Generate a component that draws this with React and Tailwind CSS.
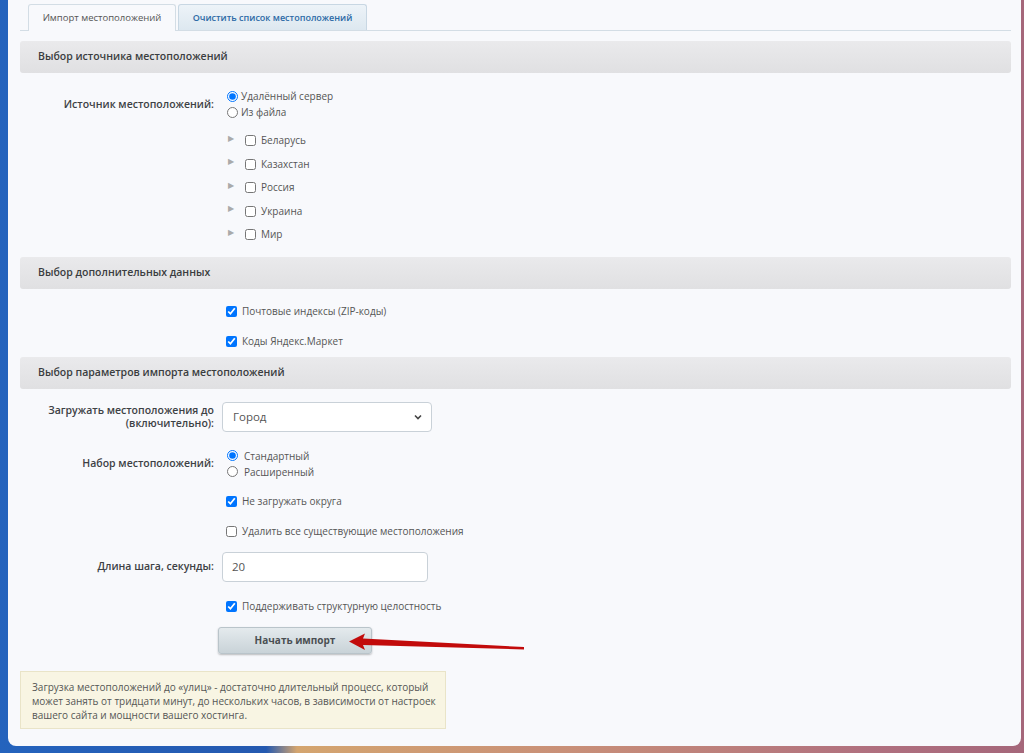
import React from 'react';

const font = { fontFamily: '"Open Sans", "Noto Sans", sans-serif' };

const SectionHeader = ({ children, className = '' }) => (
  <div className={`h-[32px] flex items-center pl-[18px] rounded-[3px] bg-gradient-to-b from-[#eaeaec] to-[#e0e0e2] text-[10.5px] font-semibold text-[#3a3d40] ${className}`}>
    {children}
  </div>
);

const Check = ({ checked }) => (
  <input type="checkbox" readOnly checked={checked} className="m-0 w-[11px] h-[11px] accent-[#0075ff]" />
);

const Radio = ({ checked }) => (
  <input type="radio" readOnly checked={checked} className="m-0 w-[11px] h-[11px] accent-[#0075ff]" />
);

const Row = ({ label, children, className = '' }) => (
  <div className={`flex items-center ${className}`}>
    <div className="w-[202px] pr-[8px] text-right text-[10.5px] font-semibold text-[#3d4145] leading-[13px]">{label}</div>
    <div className="flex-1">{children}</div>
  </div>
);

const CheckRow = ({ checked, children, className = '' }) => (
  <div className={`h-[30px] flex items-center pl-[206px] gap-[5px] text-[10px] text-[#555] ${className}`}>
    <Check checked={checked} />
    <span>{children}</span>
  </div>
);

const countries = ['Беларусь', 'Казахстан', 'Россия', 'Украина', 'Мир'];

export default function App() {
  return (
    <div className="w-[1024px] h-[753px] overflow-hidden bg-[linear-gradient(90deg,#2463bd_0%,#2459b0_26%,#d4a56f_29%,#c99078_55%,#b0707f_85%,#a5677a_100%)]" style={font}>
      <div className="relative ml-[8px] mr-[3px] h-[746px] rounded-b-[8px] bg-[#f8f9fc] px-[12px] pr-[10px]">
        {/* Tabs */}
        <div className="pt-[4px] flex items-end gap-[2px] pl-[8px] border-b border-[#d3dde5] h-[31px]">
          <div className="h-[27px] w-[148px] flex items-center justify-center rounded-t-[3px] border border-b-0 border-[#d3dde5] bg-[#f8f9fc] text-[9.5px] text-[#555] -mb-px">
            Импорт местоположений
          </div>
          <div className="h-[26px] w-[189px] flex items-center justify-center rounded-t-[3px] border border-b-0 border-[#c8d7e3] bg-gradient-to-b from-[#edf3f8] to-[#dde8f0] text-[9px] font-semibold text-[#2c6aa6]">
            Очистить список местоположений
          </div>
        </div>

        <SectionHeader className="mt-[10px]">Выбор источника местоположений</SectionHeader>

        <Row label="Источник местоположений:" className="mt-[15px]">
          <div className="text-[10px] text-[#555] leading-[16px]">
            <label className="flex items-center gap-[3px] pl-[5px]"><Radio checked />Удалённый сервер</label>
            <label className="flex items-center gap-[3px] pl-[5px]"><Radio checked={false} />Из файла</label>
          </div>
        </Row>

        <div className="mt-[9px] pl-[208px]">
          {countries.map((c) => (
            <div key={c} className="h-[23.5px] flex items-center text-[10px] text-[#555]">
              <span className="w-[17px] text-[8px] text-[#aaa] -mt-[6px]">▶</span>
              <span className="w-[16px] flex"><Check checked={false} /></span>
              <span>{c}</span>
            </div>
          ))}
        </div>

        <SectionHeader className="mt-[10px]">Выбор дополнительных данных</SectionHeader>

        <CheckRow checked className="mt-[8px]">Почтовые индексы (ZIP-коды)</CheckRow>
        <CheckRow checked className="h-[29px]">Коды Яндекс.Маркет</CheckRow>

        <SectionHeader>Выбор параметров импорта местоположений</SectionHeader>

        <Row label={<>Загружать местоположения до<br />(включительно):</>} className="mt-[13px]">
          <div className="w-[210px] h-[30px] rounded-[4px] border border-[#c9d1d8] bg-white flex items-center justify-between pl-[10px] pr-[8px] text-[11.5px] text-[#555]">
            <span>Город</span>
            <svg width="10" height="10" viewBox="0 0 10 10"><path d="M2 3.5l3 3 3-3" fill="none" stroke="#444" strokeWidth="1.6" /></svg>
          </div>
        </Row>

        <Row label="Набор местоположений:" className="mt-[16px]">
          <div className="text-[10px] text-[#555] leading-[16px]">
            <label className="flex items-center gap-[6px] pl-[5px]"><Radio checked />Стандартный</label>
            <label className="flex items-center gap-[6px] pl-[5px]"><Radio checked={false} />Расширенный</label>
          </div>
        </Row>

        <CheckRow checked className="mt-[7px]">Не загружать округа</CheckRow>
        <CheckRow checked={false}>Удалить все существующие местоположения</CheckRow>

        <Row label="Длина шага, секунды:" className="mt-[5px]">
          <div className="w-[206px] h-[30px] rounded-[4px] border border-[#c9d1d8] bg-white flex items-center pl-[9px] text-[11.5px] text-[#555]">20</div>
        </Row>

        <CheckRow checked className="mt-[10px]">Поддерживать структурную целостность</CheckRow>

        <div className="mt-[4px] pl-[198px]">
          <button className="w-[154px] h-[27px] rounded-[3px] border border-[#b9c4ca] bg-gradient-to-b from-[#e4eaed] to-[#c9d3d8] shadow-[0_1px_2px_rgba(0,0,0,0.25)] text-[10px] font-bold text-[#4a4f53]">
            Начать импорт
          </button>
        </div>

        <div className="mt-[17px] w-[426px] h-[58px] border border-[#e9e4c8] bg-[#f8f5e3] pl-[11px] pt-[8px] text-[10px] leading-[14px] text-[#555] whitespace-nowrap">
          Загрузка местоположений до «улиц» - достаточно длительный процесс, который<br />
          может занять от тридцати минут, до нескольких часов, в зависимости от настроек<br />
          вашего сайта и мощности вашего хостинга.
        </div>

        {/* annotation arrow */}
        <svg className="absolute left-[337px] top-[630px]" width="185" height="25" viewBox="0 0 185 25">
          <polygon points="4,11.5 20,3.5 18,8.5 179,17 179,19.5 18,15 20,20" fill="#c20b0b" />
        </svg>
      </div>
    </div>
  );
}
